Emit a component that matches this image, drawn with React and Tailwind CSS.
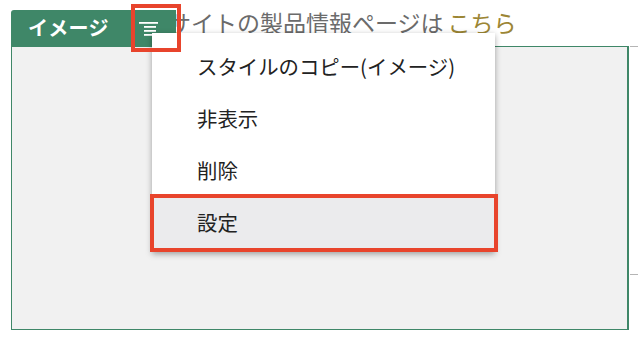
import React from "react";

const menuItems = ["スタイルのコピー(イメージ)", "非表示", "削除", "設定"];

// small "≡" style icon shown on the green tab
function MenuIcon() {
  return (
    <svg width="20" height="15" viewBox="0 0 20 15" className="block">
      <rect x="0" y="0" width="19" height="1.8" fill="#fff" />
      <rect x="5" y="4" width="12" height="1.8" fill="#fff" />
      <rect x="5" y="8" width="12" height="1.8" fill="#fff" />
      <rect x="5" y="12" width="11" height="1.8" fill="#fff" />
    </svg>
  );
}

export default function App() {
  return (
    <div className="relative w-[640px] h-[345px] overflow-hidden bg-white font-['Noto_Sans_CJK_JP','Noto_Sans',sans-serif]">
      {/* header row: tab + caption */}
      <div className="flex items-start pt-[10px] pl-[11px] h-[46px]">
        <div className="relative z-10 w-[165px] h-[36px] shrink-0 bg-[#3f8768] rounded-tl-[3px] flex items-center pl-[17px] pr-[17px]">
          <span className="text-white font-bold text-[20px] leading-none tracking-[0.3px] -mt-[1px]">
            イメージ
          </span>
          <div className="ml-auto mt-[3px]">
            <MenuIcon />
          </div>
        </div>
        <span className="-ml-[8px] text-[23px] leading-[24px] text-[#6b6b6b] whitespace-nowrap">
          サイトの製品情報ページは
          <span className="ml-[4px] text-[#9c8634]">こちら</span>
        </span>
      </div>

      {/* content panel */}
      <div className="mx-[11px] h-[284px] border border-[#3f8768] border-r-2 bg-[#f1f1f1]" />

      {/* small ruler ticks at right edge */}
      <div className="absolute right-[2px] top-[46px] w-[8px] h-px bg-[#b5b5b5]" />
      <div className="absolute right-[2px] top-[274px] w-[8px] h-px bg-[#b5b5b5]" />

      {/* dropdown menu */}
      <div className="absolute z-20 left-[152px] top-[33px] w-[343px] bg-white pt-[7px] pb-[4px] shadow-[0_2px_6px_rgba(0,0,0,0.35)]">
        {menuItems.map((item, i) => (
          <div
            key={item}
            className={
              "h-[52px] flex items-center pl-[45px] text-[20.4px] text-[#222] " +
              (i === 3 ? "bg-[#ebebed]" : "")
            }
          >
            {item}
          </div>
        ))}
      </div>

      {/* red annotation boxes */}
      <div className="absolute z-30 left-[131px] top-[4px] w-[50px] h-[48px] border-4 border-[#e8442c]" />
      <div className="absolute z-30 left-[150px] top-[194px] w-[348px] h-[58px] border-4 border-[#e8442c]" />
    </div>
  );
}
